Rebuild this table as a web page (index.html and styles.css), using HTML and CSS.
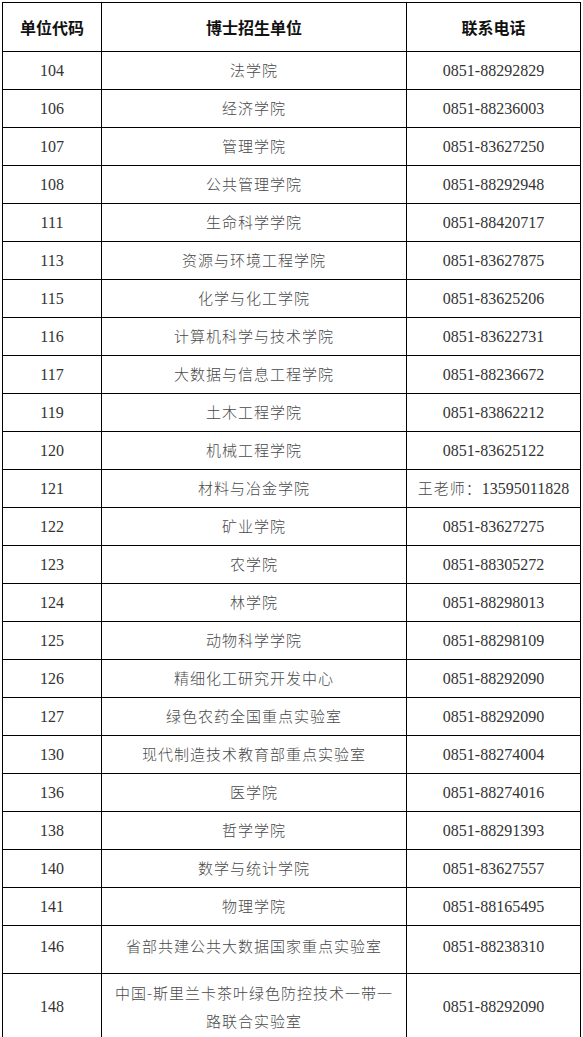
FILE: index.html
```html
<!DOCTYPE html>
<html lang="zh-CN">
<head>
<meta charset="utf-8">
<title>博士招生单位</title>
<link rel="stylesheet" href="styles.css">
</head>
<body>
<table class="units">
  <colgroup>
    <col class="c-code">
    <col class="c-name">
    <col class="c-tel">
  </colgroup>
  <thead>
    <tr class="head"><th>单位代码</th><th>博士招生单位</th><th>联系电话</th></tr>
  </thead>
  <tbody>
    <tr><td class="num">104</td><td class="txt">法学院</td><td class="num">0851-88292829</td></tr>
    <tr><td class="num">106</td><td class="txt">经济学院</td><td class="num">0851-88236003</td></tr>
    <tr><td class="num">107</td><td class="txt">管理学院</td><td class="num">0851-83627250</td></tr>
    <tr><td class="num">108</td><td class="txt">公共管理学院</td><td class="num">0851-88292948</td></tr>
    <tr><td class="num">111</td><td class="txt">生命科学学院</td><td class="num">0851-88420717</td></tr>
    <tr><td class="num">113</td><td class="txt">资源与环境工程学院</td><td class="num">0851-83627875</td></tr>
    <tr><td class="num">115</td><td class="txt">化学与化工学院</td><td class="num">0851-83625206</td></tr>
    <tr><td class="num">116</td><td class="txt">计算机科学与技术学院</td><td class="num">0851-83622731</td></tr>
    <tr><td class="num">117</td><td class="txt">大数据与信息工程学院</td><td class="num">0851-88236672</td></tr>
    <tr><td class="num">119</td><td class="txt">土木工程学院</td><td class="num">0851-83862212</td></tr>
    <tr><td class="num">120</td><td class="txt">机械工程学院</td><td class="num">0851-83625122</td></tr>
    <tr><td class="num">121</td><td class="txt">材料与冶金学院</td><td class="txt tel-mixed">王老师：<span class="digits">13595011828</span></td></tr>
    <tr><td class="num">122</td><td class="txt">矿业学院</td><td class="num">0851-83627275</td></tr>
    <tr><td class="num">123</td><td class="txt">农学院</td><td class="num">0851-88305272</td></tr>
    <tr><td class="num">124</td><td class="txt">林学院</td><td class="num">0851-88298013</td></tr>
    <tr><td class="num">125</td><td class="txt">动物科学学院</td><td class="num">0851-88298109</td></tr>
    <tr><td class="num">126</td><td class="txt">精细化工研究开发中心</td><td class="num">0851-88292090</td></tr>
    <tr><td class="num">127</td><td class="txt">绿色农药全国重点实验室</td><td class="num">0851-88292090</td></tr>
    <tr><td class="num">130</td><td class="txt">现代制造技术教育部重点实验室</td><td class="num">0851-88274004</td></tr>
    <tr><td class="num">136</td><td class="txt">医学院</td><td class="num">0851-88274016</td></tr>
    <tr><td class="num">138</td><td class="txt">哲学学院</td><td class="num">0851-88291393</td></tr>
    <tr><td class="num">140</td><td class="txt">数学与统计学院</td><td class="num">0851-83627557</td></tr>
    <tr><td class="num">141</td><td class="txt">物理学院</td><td class="num">0851-88165495</td></tr>
    <tr class="tall"><td class="num">146</td><td class="txt">省部共建公共大数据国家重点实验室</td><td class="num">0851-88238310</td></tr>
    <tr class="double"><td class="num">148</td><td class="txt">中国-斯里兰卡茶叶绿色防控技术一带一路联合实验室</td><td class="num">0851-88292090</td></tr>
  </tbody>
</table>
</body>
</html>
```

FILE: styles.css
```css
html, body {
  margin: 0;
  padding: 0;
  background: #ffffff;
}

body {
  padding: 2px 0 0 2px;
  font-family: "Noto Sans CJK SC", sans-serif;
}

.units {
  border-collapse: separate;
  border-spacing: 0;
  table-layout: fixed;
  width: 579px;
  border-top: 1px solid #000;
  border-left: 1px solid #000;
}

.c-code { width: 99px; }
.c-name { width: 305px; }
.c-tel { width: 174px; }

.units th,
.units td {
  box-sizing: border-box;
  border-right: 1px solid #000;
  border-bottom: 1px solid #000;
  padding: 0 8px;
  text-align: center;
  vertical-align: middle;
}

.units th {
  height: 49px;
  font-size: 16px;
  font-weight: 700;
  color: #111;
}

.units td {
  height: 38px;
  line-height: 28px;
}

.units td.txt {
  font-size: 15px;
  letter-spacing: 1px;
  font-weight: 300;
  color: #4a4a4a;
  padding-bottom: 1px;
}

.units td.tel-mixed {
  padding-left: 0;
  padding-right: 0;
  letter-spacing: 1px;
}

.units td.num,
.units .digits {
  font-family: "Liberation Serif", "Noto Sans CJK SC", serif;
  font-size: 16px;
  font-weight: 400;
  letter-spacing: 0;
  color: #333;
}

.units tr.tall td {
  height: 48px;
  padding-bottom: 6px;
}

.units tr.tall td.txt {
  padding-bottom: 7px;
}

.units tr.double td {
  height: 67px;
  padding-bottom: 1px;
}

.units tr.double td.txt {
  padding-bottom: 1px;
}
```
